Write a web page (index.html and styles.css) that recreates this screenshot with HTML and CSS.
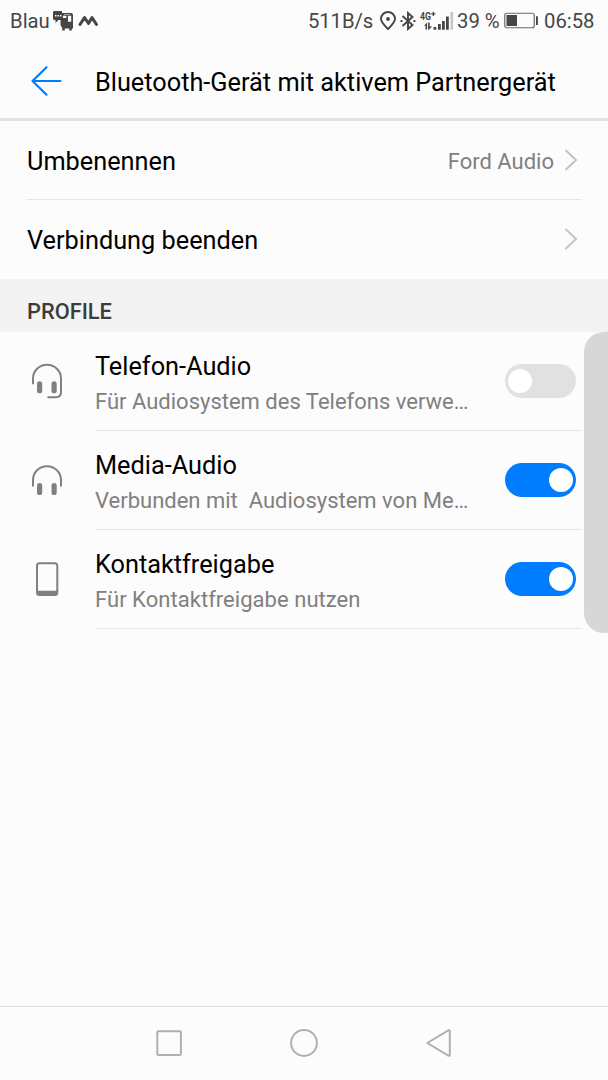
FILE: index.html
```html
<!DOCTYPE html>
<html lang="de">
<head>
<meta charset="utf-8">
<title>Bluetooth</title>
<link rel="stylesheet" href="styles.css">
</head>
<body>
<div class="screen">
  <div class="status">
    <span class="carrier">Blau</span>
    <svg class="bus" width="21" height="20" viewBox="0 0 21 20" fill="#464646"><path d="M1 0h8v9H5.500l-3 3V9H1.500Q0 9 0 7.500V1.500Q0 0 1 0z"/><path d="M8 2h10q2 0 2 2v13q0 .5-.5.500h-.7v2h-2.600v-2h-4.400v2H9.200v-2.500L7.500 14V3z"/><path d="M2 4h1.500v1.500H2zM4.500 4H6v1.500H4.500zM7 4h1.500v1.500H7zM10 4.800h3.400V7H10zM15 4.800h3.200v6H15zM11 2.900h6v.7h-6z" fill="#fcfcfc"/></svg>
    <svg class="wave" width="21" height="14" viewBox="0 0 21 14" fill="none" stroke="#464646" stroke-width="3" stroke-linecap="round" stroke-linejoin="round"><path d="M2 10.500L6.500 3.500 10.500 9.500 14 3.500 18.500 10.500"/></svg>
    <span class="rate">511B/s</span>
    <svg class="pin" width="16" height="20" viewBox="0 0 16 20" fill="none" stroke="#464646" stroke-width="1.900"><path d="M8 18C5.500 15.500 1 11.500 1 7.800a7 6.800 0 0 1 14 0C15 11.500 10.500 15.500 8 18z"/><circle cx="8" cy="8" r="1.900" fill="#464646" stroke="none"/></svg>
    <svg class="bt" width="16" height="20" viewBox="0 0 16 20" fill="none" stroke="#464646" stroke-width="1.900"><path d="M2.500 5l10 9L8 18V2l4.500 4-10 9"/><path d="M.5 10h2M13.400 10h2" stroke-width="2"/></svg>
    <svg class="signal" width="35" height="26" viewBox="0 -3 35 26" fill="#464646"><text x="0" y="8.500" class="net" textLength="11" lengthAdjust="spacingAndGlyphs">4G</text><path d="M11.200 2.300h1.500V.8h1.300v1.500h1.500v1.300H14v1.500h-1.300V3.600h-1.500zM4 14.800L7.100 11.600v7H5.500v-3.800zM8.100 11.600h1.600v3.800h2.500L8.800 18.700h-.7zM13.500 16h2.800v2.700h-2.800zM18 13h2.800v5.700H18zM22 10h2.800v8.700H22zM26 5.500h2.800v13.200H26z"/><path d="M30.500 1h2.600v17.700h-2.600z" fill="#c6c6c6"/></svg>
    <span class="percent">39 %</span>
    <svg class="battery" width="36" height="18" viewBox="0 0 36 18"><rect x=".75" y="1.250" width="29.500" height="14.500" rx="2" fill="none" stroke="#6a6a6a" stroke-width="1.200"/><path d="M2.500 3h10.500v11H2.500zM32 4.300h1.900v8.700H32z" fill="#464646"/></svg>
    <span class="clock">06:58</span>
  </div>
  <div class="header">
    <svg class="back" width="34" height="34" viewBox="0 0 34 34" fill="none" stroke="#007dff" stroke-width="2.200" stroke-linecap="round" stroke-linejoin="round"><path d="M18.500 2.200L4.500 16l14 13.700M5 16H32.500"/></svg>
    <h1>Bluetooth-Gerät mit aktivem Partnergerät</h1>
  </div>
  <div class="row row-rename"><span class="title">Umbenennen</span><span class="value">Ford Audio</span><svg class="chevron" width="14" height="24" viewBox="0 0 14 24"><path d="M2 2.500L12 12 2 21.500"/></svg></div>
  <div class="row row-end"><span class="title">Verbindung beenden</span><svg class="chevron" width="14" height="24" viewBox="0 0 14 24"><path d="M2 2.500L12 12 2 21.500"/></svg></div>
  <div class="section"><span>PROFILE</span></div>
  <div class="profile">
    <svg class="icon" width="34" height="38" viewBox="0 0 34 38"><path class="line" d="M3 20.500V15.500a14 13.700 0 0 1 28 0V29q0 5.200-5 5.200H18.200"/><rect x="7" y="18.300" width="5.200" height="12" rx="2.600"/><rect x="21.500" y="18.300" width="5.200" height="12" rx="2.600"/></svg>
    <div class="body"><div class="copy"><div class="title">Telefon-Audio</div><div class="sub">Für Audiosystem des Telefons verwe…</div></div><div class="switch"><i></i></div></div>
  </div>
  <div class="profile">
    <svg class="icon" width="34" height="38" viewBox="0 0 34 38"><path class="line" d="M3 23.800V18a14 13.700 0 0 1 28 0v5.800"/><rect x="7" y="21" width="5.200" height="12" rx="2.600"/><rect x="21.500" y="21" width="5.200" height="12" rx="2.600"/></svg>
    <div class="body"><div class="copy"><div class="title">Media-Audio</div><div class="sub">Verbunden mit  Audiosystem von Me…</div></div><div class="switch on"><i></i></div></div>
  </div>
  <div class="profile">
    <svg class="icon" width="34" height="38" viewBox="0 0 34 38"><rect class="line" x="7" y="2.300" width="20.300" height="31.700" rx="2.500"/><path d="M7 29.800h20.300v3q0 1.500-2 1.500H9q-2 0-2-1.500z"/></svg>
    <div class="body"><div class="copy"><div class="title">Kontaktfreigabe</div><div class="sub wide">Für Kontaktfreigabe nutzen</div></div><div class="switch on"><i></i></div></div>
  </div>
  <div class="edge-panel"></div>
  <div class="nav">
    <svg width="30" height="30" viewBox="0 0 30 30"><rect x="3.300" y="3.300" width="23.600" height="23.600" rx="1"/></svg>
    <svg width="30" height="30" viewBox="0 0 30 30"><circle cx="15" cy="15" r="12.900"/></svg>
    <svg width="30" height="30" viewBox="0 0 30 30"><path d="M3.300 15L24.700 2.200Q25.800 2 25.800 3v24q0 1-1.100.8z"/></svg>
  </div>
</div>
</body>
</html>
```
FILE: styles.css
```css
* { box-sizing: border-box; }
body { margin: 0; background: #fcfcfc; font-family: Roboto, sans-serif; color: #000; }
.screen { position: relative; width: 608px; height: 1080px; display: flex; flex-direction: column; overflow: hidden; }
.screen span, .title, .sub, h1 { white-space: pre; }
.status { height: 42px; display: flex; align-items: center; padding: 0 0 0 10px; font-size: 20.3px; line-height: 42px; color: #464646; flex: none; }
.status svg { flex: none; }
.carrier { width: 43px; }
.wave { margin-left: 4px; }
.rate { margin-left: auto; width: 71.5px; letter-spacing: -.1px; }
.bt { margin-left: 4px; }
.signal { margin-left: 4.5px; margin-right: 2px; overflow: visible; }
.net { font: 700 10.5px Roboto, sans-serif; }
.percent { width: 47px; }
.battery { margin-right: 4px; }
.clock { width: 64px; }
.header { height: 79px; flex: none; display: flex; align-items: center; padding: 3px 0 0 28px; border-bottom: 3px solid #e2e2e2; }
.back { margin-right: 33px; }
h1 { margin: 0; font-size: 25.3px; font-weight: 400; line-height: 34px; padding-top: 2px; }
.row { flex: none; display: flex; align-items: center; margin: 0 27px; padding-right: 3px; height: 79px; }
.row-rename { border-bottom: 1px solid #e4e4e4; }
.title { font-size: 25.3px; line-height: 34px; }
.row .title { padding-top: 2px; }
.row-rename .title { padding-top: 3px; }
.value { margin-left: auto; margin-right: 10px; padding-top: 2px; font-size: 22px; color: #808080; }
.chevron { fill: none; stroke: #c4c4c4; stroke-width: 2; stroke-linecap: round; }
.row-end .chevron { margin-left: auto; margin-bottom: 2px; }
.section { flex: none; height: 53.4px; padding: 19px 27px 0; background: #f3f3f3; color: #3c3c3c; font-size: 21.8px; font-weight: 500; line-height: 28px; }
.profile { flex: none; height: 99px; display: flex; align-items: center; padding: 0 27px 0 30px; }
.icon { margin-right: 31px; fill: #808080; }
.icon .line { fill: none; stroke: #808080; stroke-width: 2; stroke-linecap: round; }
.body { flex: 1; height: 99px; display: flex; align-items: center; justify-content: space-between; padding-right: 5px; border-bottom: 1px solid #e4e4e4; }
.copy { padding-top: 4px; }
.sub { font-size: 22px; line-height: 30px; margin-top: 3px; color: #808080; }
.wide { letter-spacing: .04px; }
.switch { width: 71px; height: 34px; padding: 5px 3px; border-radius: 17px; background: #e1e1e1; display: flex; }
.switch i { width: 24px; height: 24px; border-radius: 50%; background: #fff; }
.switch.on { background: #007dff; justify-content: flex-end; }
.edge-panel { position: absolute; left: 584px; top: 332px; width: 24px; height: 301px; border-radius: 20px 0 0 20px; background: #d7d7d7; }
.nav { margin-top: auto; height: 74px; padding-bottom: 2px; border-top: 1px solid #dedede; display: flex; align-items: center; justify-content: center; gap: 105px; }
.nav svg { fill: none; stroke: #b0b0b0; stroke-width: 2; stroke-linejoin: round; }
```
